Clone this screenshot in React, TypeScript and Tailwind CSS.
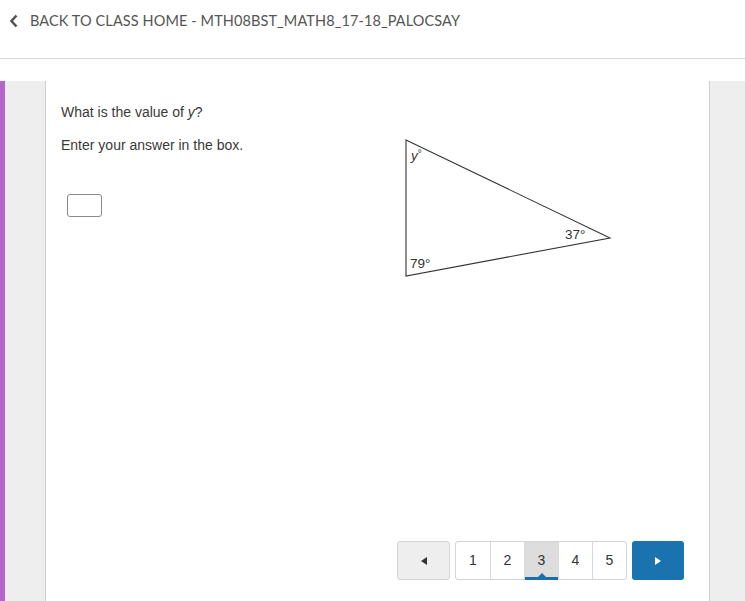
import React from 'react';

const pages = [1, 2, 3, 4, 5];
const current = 3;

const labelFont = "'Liberation Sans', Arial, sans-serif";

const Triangle: React.FC = () => (
  <svg width="214" height="142" viewBox="0 0 214 142" className="block">
    <polygon points="1,2 205,100 1,138" fill="none" stroke="#333" strokeWidth="1.1" />
    <text x="6" y="22" fontSize="13.5" fill="#333" fontFamily={labelFont}>
      <tspan fontStyle="italic">y</tspan>
      <tspan fontSize="10" dy="-3">°</tspan>
    </text>
    <text x="160" y="101" fontSize="13.5" fill="#333" fontFamily={labelFont}>37°</text>
    <text x="5" y="130" fontSize="13.5" fill="#333" fontFamily={labelFont}>79°</text>
  </svg>
);

export default function App() {
  return (
    <div className="w-[745px] h-[601px] bg-white overflow-hidden flex flex-col">
      {/* 顶部返回 */}
      <div className="h-[59px] shrink-0 border-b border-[#d8d8e2] flex items-start pl-[9px] pt-[12px]">
        <svg width="10" height="18" viewBox="0 0 10 18" className="mr-[11px]">
          <path d="M7.5 3.5 L2.5 9 L7.5 14.5" fill="none" stroke="#555" strokeWidth="2.6" />
        </svg>
        <span className="text-[14.5px] leading-[18px] text-[#555] tracking-[0.1px]" style={{ fontFamily: 'Lato, sans-serif' }}>
          BACK TO CLASS HOME - MTH08BST_MATH8_17-18_PALOCSAY
        </span>
      </div>

      <div className="h-[22px] shrink-0" />

      <div className="flex flex-1 min-h-0">
        <div className="w-[5px] bg-[#b466cc]" />
        <div className="w-[41px] bg-[#eeeeee] border-r border-[#cfcfcf]" />

        {/* 题目 */}
        <div
          className="flex-1 flex flex-col pl-[15px] pr-[25px] pt-[22px] pb-[21px] text-[14px] text-[#3a3a3a]"
          style={{ fontFamily: labelFont }}
        >
          <p className="leading-[18px]">
            What is the value of <i>y</i>?
          </p>
          <div className="flex mt-[15px]">
            <div className="w-[344px]">
              <p className="leading-[18px]">Enter your answer in the box.</p>
              <input
                type="text"
                className="block mt-[40px] ml-[6px] w-[35px] h-[23px] border border-[#8a8a8a] rounded-[3px] bg-white"
              />
            </div>
            <div className="mt-[2px]">
              <Triangle />
            </div>
          </div>

          <div className="mt-auto flex justify-end items-center gap-[5px]">
            <button className="w-[53px] h-[39px] bg-[#eeeeee] border border-[#d4d4d4] rounded-[3px] flex items-center justify-center">
              <svg width="6" height="8" viewBox="0 0 6 8"><polygon points="6,0 6,8 0,4" fill="#333" /></svg>
            </button>
            <div className="flex h-[39px] border border-[#d4d4d4] rounded-[3px] bg-white">
              {pages.map((p, i) => (
                <div
                  key={p}
                  className={`relative w-[34px] flex items-center justify-center text-[14px] text-[#333] ${
                    i > 0 ? 'border-l border-[#d9d9d9]' : ''
                  } ${p === current ? 'bg-[#dddddd]' : ''}`}
                >
                  {p}
                  {p === current && (
                    <>
                      <span className="absolute left-0 right-0 bottom-[-1px] h-[3px] bg-[#1a6fa8]" />
                      <span className="absolute bottom-[2px] left-1/2 -translate-x-1/2 w-0 h-0 border-l-[4px] border-r-[4px] border-b-[4px] border-l-transparent border-r-transparent border-b-[#1a6fa8]" />
                    </>
                  )}
                </div>
              ))}
            </div>
            <button className="w-[52px] h-[39px] bg-[#1a72ae] rounded-[3px] flex items-center justify-center">
              <svg width="6" height="8" viewBox="0 0 6 8"><polygon points="0,0 0,8 6,4" fill="#fff" /></svg>
            </button>
          </div>
        </div>

        <div className="w-[36px] bg-[#eeeeee] border-l border-[#cfcfcf]" />
      </div>
    </div>
  );
}
